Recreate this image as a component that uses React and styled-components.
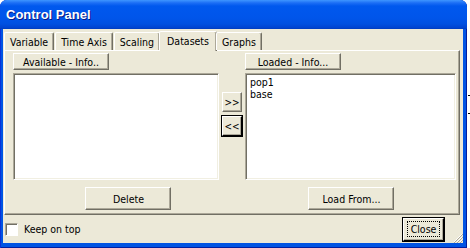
import React from 'react';
import styled, { createGlobalStyle } from 'styled-components';

const GlobalStyle = createGlobalStyle`
    html, body {
        margin: 0;
        padding: 0;
        background: #ffffff;
    }
    body {
        font-family: "DejaVu Sans Condensed", "DejaVu Sans", "Liberation Sans", sans-serif;
        font-size: 10.5px;
        color: #000;
    }
`;

const colors = {
    face: '#ECE9D8',
    light: '#ffffff',
    shadow: '#ACA899',
    dark: '#716F64',
    frame: '#0054E3',
};

const TABS = ['Variable', 'Time Axis', 'Scaling', 'Datasets', 'Graphs'];

export default function App() {
    return (
        <>
            <GlobalStyle />
            <Window>
                <TitleBar>Control Panel</TitleBar>
                <Body>
                    <TabRow>
                        {TABS.map((t) => (
                            <Tab key={t} $active={t === 'Datasets'}>{t}</Tab>
                        ))}
                    </TabRow>
                    <TabPanel>
                        <Columns>
                            <Column>
                                <HeaderButton>Available - Info..</HeaderButton>
                                <ListBox $width={206} />
                            </Column>
                            <MoveButtons>
                                <SmallButton>&gt;&gt;</SmallButton>
                                <SmallButton $default>&lt;&lt;</SmallButton>
                            </MoveButtons>
                            <Column>
                                <HeaderButton>Loaded - Info...</HeaderButton>
                                <ListBox $width={211}>
                                    <Item>pop1</Item>
                                    <Item>base</Item>
                                </ListBox>
                            </Column>
                        </Columns>
                        <ActionRow>
                            <ActionSlot $width={232}>
                                <ActionButton>Delete</ActionButton>
                            </ActionSlot>
                            <ActionSlot $width={216}>
                                <ActionButton>Load From...</ActionButton>
                            </ActionSlot>
                        </ActionRow>
                    </TabPanel>
                    <Footer>
                        <CheckLabel>
                            <CheckBox />
                            Keep on top
                        </CheckLabel>
                        <CloseButton>
                            <FocusRing>Close</FocusRing>
                        </CloseButton>
                    </Footer>
                    <Grip width="10" height="10" viewBox="0 0 10 10">
                        <path d="M9 1 L1 9 M9 4 L4 9 M9 7 L7 9" stroke="#ffffff" strokeWidth="1" />
                        <path d="M10 1 L1 10 M10 4 L4 10 M10 7 L7 10" stroke="#ACA899" strokeWidth="1" />
                    </Grip>
                </Body>
            </Window>
            <EdgeMarks>
                <span />
                <span />
            </EdgeMarks>
        </>
    );
}

const Window = styled.div`
    width: 467px;
    height: 248px;
    box-sizing: border-box;
    display: flex;
    flex-direction: column;
    background: ${colors.frame};
    border-radius: 7px 7px 0 0;
    padding: 0 4px 5px 3px;
    box-shadow: inset 1px 0 #0831D9, inset -1px 0 #001EA0, inset 0 -1px #001EA0;
    float: left;
`;

const TitleBar = styled.div`
    height: 29px;
    margin: 0 -4px 0 -3px;
    padding: 0 0 0 6px;
    box-sizing: border-box;
    border-radius: 7px 7px 0 0;
    display: flex;
    align-items: center;
    color: #fff;
    font-family: "Liberation Sans", Arial, sans-serif;
    font-weight: bold;
    font-size: 13px;
    text-shadow: 1px 1px #0A1883;
    background: linear-gradient(
        to bottom,
        #3E95FF 0px,
        #1B6DF5 3px,
        #0058EE 6px,
        #0055EA 18px,
        #0050E0 24px,
        #0043CF 28px,
        #003BB8 29px
    );
`;

const Body = styled.div`
    position: relative;
    flex: 1;
    background: ${colors.face};
    display: flex;
    flex-direction: column;
    padding: 2px 3px 0 1px;
`;

const TabRow = styled.div`
    display: flex;
    align-items: flex-end;
    height: 19px;
    position: relative;
    z-index: 1;
`;

const Tab = styled.div`
    box-sizing: border-box;
    height: ${(p) => (p.$active ? '20px' : '18px')};
    margin: ${(p) => (p.$active ? '0 -1px -1px -2px' : '0 1px 0 0')};
    padding: ${(p) => (p.$active ? '3px 7px 0 7px' : '0 5px 0 5px')};
    display: flex;
    align-items: ${(p) => (p.$active ? 'flex-start' : 'center')};
    background: ${colors.face};
    border-left: 1px solid ${colors.light};
    border-top: 1px solid ${colors.light};
    border-right: 1px solid ${colors.dark};
    box-shadow: inset -1px 0 ${colors.shadow};
    border-radius: 2px 2px 0 0;
    white-space: nowrap;
`;

const TabPanel = styled.div`
    box-sizing: border-box;
    width: 456px;
    height: 165px;
    border-left: 1px solid ${colors.light};
    border-top: 1px solid ${colors.light};
    border-right: 1px solid ${colors.dark};
    border-bottom: 1px solid ${colors.dark};
    box-shadow: inset -1px -1px ${colors.shadow};
    padding: 2px 0 0 8px;
    display: flex;
    flex-direction: column;
`;

const Columns = styled.div`
    display: flex;
    align-items: flex-start;
`;

const Column = styled.div`
    display: flex;
    flex-direction: column;
    gap: 3px;
`;

const raised = `
    box-sizing: border-box;
    background: ${colors.face};
    border-top: 1px solid ${colors.light};
    border-left: 1px solid ${colors.light};
    border-right: 1px solid ${colors.dark};
    border-bottom: 1px solid ${colors.dark};
    box-shadow: inset -1px -1px ${colors.shadow};
    font: inherit;
    color: #000;
    padding: 0;
    display: flex;
    align-items: center;
    justify-content: center;
`;

const HeaderButton = styled.div`
    ${raised}
    width: 96px;
    height: 17px;
`;

const ListBox = styled.div`
    box-sizing: border-box;
    width: ${(p) => p.$width}px;
    height: 107px;
    background: #fff;
    border-top: 1px solid ${colors.shadow};
    border-left: 1px solid ${colors.shadow};
    border-right: 1px solid ${colors.light};
    border-bottom: 1px solid ${colors.light};
    box-shadow: inset 1px 1px ${colors.dark}, inset -1px -1px #F1EFE2;
    padding: 2px 4px;
`;

const Item = styled.div`
    line-height: 12px;
`;

const MoveButtons = styled.div`
    display: flex;
    flex-direction: column;
    gap: 4px;
    padding: 39px 3px 0 3px;
`;

const SmallButton = styled.div`
    ${raised}
    width: 20px;
    height: 20px;
    font-size: 10px;
    ${(p) => p.$default && `
        outline: 1px solid #000;
        border-color: ${colors.light} #000 #000 ${colors.light};
    `}
`;

const ActionRow = styled.div`
    display: flex;
    margin-top: 7px;
`;

const ActionSlot = styled.div`
    width: ${(p) => p.$width}px;
    display: flex;
    justify-content: center;
`;

const ActionButton = styled.div`
    ${raised}
    width: 86px;
    height: 23px;
`;

const Footer = styled.div`
    display: flex;
    align-items: center;
    justify-content: space-between;
    height: 28px;
    padding: 0 16px 0 1px;
`;

const CheckLabel = styled.label`
    display: flex;
    align-items: center;
    gap: 6px;
`;

const CheckBox = styled.span`
    box-sizing: border-box;
    width: 13px;
    height: 13px;
    background: #fff;
    border-top: 1px solid ${colors.shadow};
    border-left: 1px solid ${colors.shadow};
    border-right: 1px solid ${colors.light};
    border-bottom: 1px solid ${colors.light};
    box-shadow: inset 1px 1px ${colors.dark};
`;

const CloseButton = styled.div`
    ${raised}
    width: 41px;
    height: 23px;
    border-color: ${colors.light} #000 #000 ${colors.light};
    outline: 1px solid #000;
`;

const FocusRing = styled.span`
    border: 1px dotted #000;
    padding: 1px 3px;
    line-height: 12px;
`;

const Grip = styled.svg`
    position: absolute;
    right: 0;
    bottom: 0;
`;

const EdgeMarks = styled.div`
    float: left;
    display: flex;
    flex-direction: column;
    gap: 17px;
    padding: 95px 0 0 1px;

    span {
        display: block;
        width: 2px;
        height: 1px;
        background: #000;
    }
`;
